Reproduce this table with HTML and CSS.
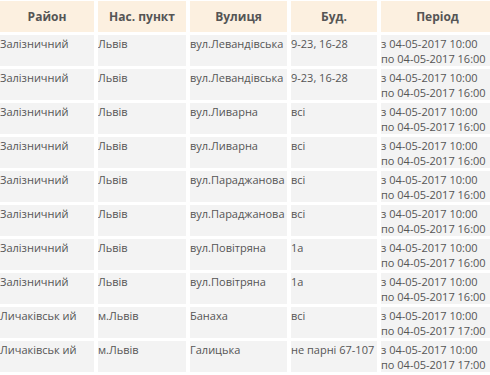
FILE: index.html
```html
<!DOCTYPE html>
<html lang="uk">
<head>
<meta charset="utf-8">
<link rel="stylesheet" href="styles.css">
</head>
<body>
<table class="outages">
  <colgroup>
    <col class="c-district"><col class="c-city"><col class="c-street"><col class="c-house"><col class="c-period">
  </colgroup>
  <thead>
    <tr><th>Район</th><th>Нас. пункт</th><th>Вулиця</th><th>Буд.</th><th>Період</th></tr>
  </thead>
  <tbody>
    <tr><td>Залізничний</td><td>Львів</td><td>вул.Левандівська</td><td>9-23, 16-28</td><td>з 04-05-2017 10:00<br>по 04-05-2017 16:00</td></tr>
    <tr><td>Залізничний</td><td>Львів</td><td>вул.Левандівська</td><td>9-23, 16-28</td><td>з 04-05-2017 10:00<br>по 04-05-2017 16:00</td></tr>
    <tr><td>Залізничний</td><td>Львів</td><td>вул.Ливарна</td><td>всі</td><td>з 04-05-2017 10:00<br>по 04-05-2017 16:00</td></tr>
    <tr><td>Залізничний</td><td>Львів</td><td>вул.Ливарна</td><td>всі</td><td>з 04-05-2017 10:00<br>по 04-05-2017 16:00</td></tr>
    <tr><td>Залізничний</td><td>Львів</td><td>вул.Параджанова</td><td>всі</td><td>з 04-05-2017 10:00<br>по 04-05-2017 16:00</td></tr>
    <tr><td>Залізничний</td><td>Львів</td><td>вул.Параджанова</td><td>всі</td><td>з 04-05-2017 10:00<br>по 04-05-2017 16:00</td></tr>
    <tr><td>Залізничний</td><td>Львів</td><td>вул.Повітряна</td><td>1а</td><td>з 04-05-2017 10:00<br>по 04-05-2017 16:00</td></tr>
    <tr><td>Залізничний</td><td>Львів</td><td>вул.Повітряна</td><td>1а</td><td>з 04-05-2017 10:00<br>по 04-05-2017 16:00</td></tr>
    <tr><td>Личаківськ ий</td><td>м.Львів</td><td>Банаха</td><td>всі</td><td>з 04-05-2017 10:00<br>по 04-05-2017 17:00</td></tr>
    <tr><td>Личаківськ ий</td><td>м.Львів</td><td>Галицька</td><td>не парні 67-107</td><td>з 04-05-2017 10:00<br>по 04-05-2017 17:00</td></tr>
  </tbody>
</table>
</body>
</html>
```

FILE: styles.css
```css
html, body {
  margin: 0;
  padding: 0;
  background: #fff;
  overflow: hidden;
}
body {
  font-family: "Open Sans", "DejaVu Sans", sans-serif;
  font-size: 11px;
  color: #555;
}
.outages {
  border-collapse: separate;
  border-spacing: 4px 3px;
  margin: -2px 0 0 -4px;
  table-layout: fixed;
  width: 502px;
}
.c-district { width: 94px; }
.c-city { width: 88px; }
.c-street { width: 97px; }
.c-house { width: 86px; }
.c-period { width: 113px; }
.outages th {
  background: #fcf0e0;
  font-size: 12px;
  font-weight: bold;
  text-align: center;
  height: 31px;
  padding: 0;
  color: #555;
}
.outages td {
  background: #f3f3f3;
  vertical-align: top;
  padding: 1px 0 0 0;
  height: 30px;
  line-height: 15px;
  white-space: nowrap;
  overflow: hidden;
}
```
